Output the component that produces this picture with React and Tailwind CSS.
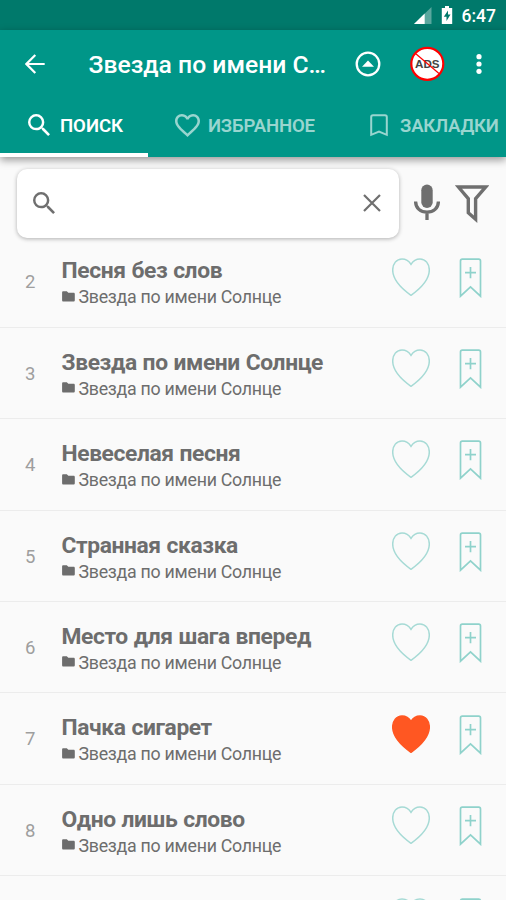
import clsx from "clsx";

const ALBUM = "Звезда по имени Солнце";

const songs = [
  { id: 2, title: "Песня без слов" },
  { id: 3, title: "Звезда по имени Солнце" },
  { id: 4, title: "Невеселая песня" },
  { id: 5, title: "Странная сказка" },
  { id: 6, title: "Место для шага вперед" },
  { id: 7, title: "Пачка сигарет", liked: true },
  { id: 8, title: "Одно лишь слово" },
];

const SearchIcon = ({ className }) => (
  <svg viewBox="3 3 17.49 17.49" fill="currentColor" className={className}>
    <path d="M15.5 14h-.79l-.28-.27A6.471 6.471 0 0 0 16 9.5 6.5 6.5 0 1 0 9.5 16c1.61 0 3.09-.59 4.23-1.57l.27.28v.79l5 4.99L20.49 19l-4.99-5zm-6 0C7.01 14 5 11.99 5 9.5S7.01 5 9.5 5 14 7.01 14 9.5 11.99 14 9.5 14z" />
  </svg>
);

const StatusBar = () => (
  <div className="flex h-[30px] shrink-0 items-center justify-end bg-[#00796b] pr-[10px] text-white">
    <svg viewBox="0 0 18 17" className="h-[17px] w-[18px]">
      <path d="M17.5 0v17H0z" fill="#fff" fillOpacity=".35" />
      <path d="M10.7 6.6V17H0z" fill="#fff" />
    </svg>
    <svg viewBox="0 0 12 18" className="ml-[9px] h-[18px] w-3">
      <path d="M4 0h4v2h3.2v16H.8V2H4z" fill="#fff" />
      <path d="M7 4.5 2.8 10.7h2.7v4.2l4-6.5H7z" fill="#00796b" />
    </svg>
    <span className="ml-[9px] pt-[3px] text-[17.5px] leading-none font-medium">6:47</span>
  </div>
);

const Toolbar = () => (
  <div className="flex h-[68px] items-center pl-[24.5px] text-white">
    <svg viewBox="0 0 20 20" className="h-5 w-5 shrink-0">
      <path d="M10.300.9 1.400 10l8.900 9.100M1.600 10H19.700" fill="none" stroke="currentColor" strokeWidth="2.200" />
    </svg>
    <h1 className="ml-[44px] w-[266.500px] pt-[2px] text-[24.7px] font-medium whitespace-nowrap">
      Звезда по имени С…
    </h1>
    <svg viewBox="0 0 26 26" className="h-[26px] w-[26px] shrink-0">
      <circle cx="13" cy="13" r="11.3" fill="none" stroke="currentColor" strokeWidth="2.3" />
      <path d="M13 9.5 19 15.8H7z" fill="currentColor" />
    </svg>
    <svg viewBox="0 0 36 36" className="ml-[28px] h-9 w-9 shrink-0">
      <circle cx="18.3" cy="17.8" r="16" fill="#fff" stroke="#f00" strokeWidth="2.2" />
      <text
        x="18.3"
        y="22"
        textAnchor="middle"
        textLength="24.5"
        lengthAdjust="spacingAndGlyphs"
        className="fill-[#444] font-['Liberation_Sans',sans-serif] text-[11.5px] font-bold"
      >
        ADS
      </text>
      <path d="M6.5 7.5 30 27.5" stroke="#f00" strokeWidth="1.2" />
    </svg>
    <svg viewBox="0 0 6 20" fill="currentColor" className="ml-[31px] h-5 w-1.5 shrink-0">
      <circle cx="3" cy="2.7" r="2.6" />
      <circle cx="3" cy="10" r="2.6" />
      <circle cx="3" cy="17.3" r="2.6" />
    </svg>
  </div>
);

const Tabs = () => (
  <div className="flex h-[59px] text-[18.6px] font-semibold text-white">
    <div className="flex w-[148px] items-center border-b-4 border-white pl-7">
      <SearchIcon className="mb-[2px] h-[22px] w-[22px]" />
      <span className="ml-2.5 pt-[2px] tracking-[-0.05px]">ПОИСК</span>
    </div>
    <div className="flex w-[194px] items-center border-b-4 border-transparent pl-[27px] text-[#99d5cf]">
      <svg viewBox="2 3 20 18.35" fill="currentColor" className="h-[23px] w-[25px] shrink-0">
        <path d="M16.5 3c-1.74 0-3.41.81-4.5 2.09C10.91 3.81 9.24 3 7.5 3 4.42 3 2 5.42 2 8.5c0 3.78 3.4 6.86 8.55 11.54L12 21.35l1.45-1.32C18.6 15.36 22 12.28 22 8.5 22 5.42 19.58 3 16.5 3zm-4.4 15.55l-.1.1-.1-.1C7.14 14.24 4 11.39 4 8.5 4 6.5 5.5 5 7.5 5c1.54 0 3.04.99 3.57 2.36h1.87C13.46 5.99 14.96 5 16.5 5c2 0 3.5 1.5 3.5 3.5 0 2.89-3.14 5.74-7.9 10.05z" />
      </svg>
      <span className="ml-2 pt-[2px] tracking-[-0.2px]">ИЗБРАННОЕ</span>
    </div>
    <div className="flex flex-1 items-center border-b-4 border-transparent pl-[28px] text-[#99d5cf]">
      <svg viewBox="0 0 18 23" className="mb-px h-[23px] w-[18px] shrink-0">
        <path d="M1.200 20.800V3Q1.200 1.200 3 1.200H15Q16.800 1.200 16.800 3V20.800L9 17.500Z" fill="none" stroke="currentColor" strokeWidth="2" />
      </svg>
      <span className="ml-[12px] pt-[2px] tracking-[-0.25px]">ЗАКЛАДКИ</span>
    </div>
  </div>
);

const SearchBar = () => (
  <div className="relative flex h-[79.3px] shrink-0 items-start pt-[11.5px] pl-[17px] text-[#6f6f6f]">
    <div className="flex h-[69px] w-[382px] shrink-0 items-center justify-between rounded-[10px] bg-white pr-[18px] pl-4 shadow-[0_1px_4px_rgba(0,0,0,0.3)]">
      <SearchIcon className="h-[22px] w-[22px]" />
      <svg viewBox="0 0 18 18" className="h-[18px] w-[18px]">
        <path d="m1 1 16 16M17 1 1 17" stroke="currentColor" strokeWidth="2.2" />
      </svg>
    </div>
    <svg viewBox="0 0 26 36" className="mt-[15.5px] ml-[15px] h-9 w-[26px] shrink-0">
      <rect x="7.3" y="0.5" width="11.4" height="23.5" rx="5.7" fill="currentColor" />
      <path d="M1.6 17.5c0 6.7 5 10.7 11.4 10.7s11.4-4 11.4-10.7M13 28v8" fill="none" stroke="currentColor" strokeWidth="3.3" />
    </svg>
    <svg viewBox="0 0 34 39" className="mt-[16px] ml-[15px] h-[39px] w-[34px] shrink-0">
      <path d="M3.4 2h27.2L20.6 13.7v20.5l-7.3-6.5v-14z" fill="none" stroke="currentColor" strokeWidth="3.4" />
    </svg>
  </div>
);

const RowActions = ({ liked }) => (
  <>
    <svg viewBox="0 0 38 38" className="mt-[21.3px] h-[38px] w-[38px] shrink-0">
      <path
        d="M19 6.3C16.8 2.6 13.3.9 10 .9 4.5.9.7 5.8.7 12 .7 22.5 9.5 30.6 19 37.3 28.5 30.6 37.3 22.5 37.3 12 37.3 5.8 33.5.9 28 .9 24.7.9 21.2 2.6 19 6.3z"
        strokeWidth="1.5"
        className={clsx(liked ? "fill-[#ff5722] stroke-[#ff5722]" : "fill-none stroke-[#a6dad5]")}
      />
    </svg>
    <svg viewBox="0 0 23 40" className="mt-[21.3px] ml-[29px] h-10 w-[23px] shrink-0">
      <path
        d="M1.5 38.2V3Q1.5 1.2 3.3 1.2H19.7Q21.5 1.2 21.5 3V38.2L11.5 28.8ZM6 14.6H17M11.5 9V20.2"
        fill="none"
        stroke="#8fd2cb"
        strokeWidth="1.7"
      />
    </svg>
  </>
);

const SongRow = ({ song }) => (
  <div className="flex h-[91.43px] shrink-0 border-b-[1.5px] border-[#ececec]">
    <span className="w-[61.5px] pt-[34px] pl-[25px] text-[18.5px] leading-[24px] text-[#9e9e9e]">{song.id}</span>
    <div className="w-[330.5px] pt-[21px] text-[#6d6d6d]">
      <h2 className="text-[22.8px] leading-[28px] font-bold tracking-[-0.39px] [word-spacing:0.6px]">{song.title}</h2>
      <div className="flex items-center">
        <svg viewBox="0 0 13 11" fill="currentColor" className="mb-[2px] ml-[0.5px] h-[11px] w-[13px]">
          <path d="M1.3.3h3.5l1.5 1.5h5.2c.8 0 1.3.5 1.3 1.2v6.3c0 .8-.5 1.3-1.3 1.3H1.3C.6 10.6.1 10.1.1 9.3V1.6C.1.8.6.3 1.3.3z" />
        </svg>
        <span className="ml-[3.5px] text-[17.8px] leading-[24px] tracking-[-0.27px]">{ALBUM}</span>
      </div>
    </div>
    <RowActions liked={song.liked} />
  </div>
);

export default function App() {
  return (
    <div className="flex h-[900px] w-[506px] flex-col overflow-hidden bg-[#fafafa] font-[Roboto,sans-serif]">
      <StatusBar />
      <header className="relative z-10 shrink-0 bg-[#009688] shadow-[0_3px_8px_rgba(0,0,0,0.4)]">
        <Toolbar />
        <Tabs />
      </header>
      <SearchBar />
      <div className="flex flex-col">
        {songs.map((song) => (
          <SongRow key={song.id} song={song} />
        ))}
        <div className="flex pl-[392px]">
          <RowActions />
        </div>
      </div>
    </div>
  );
}
